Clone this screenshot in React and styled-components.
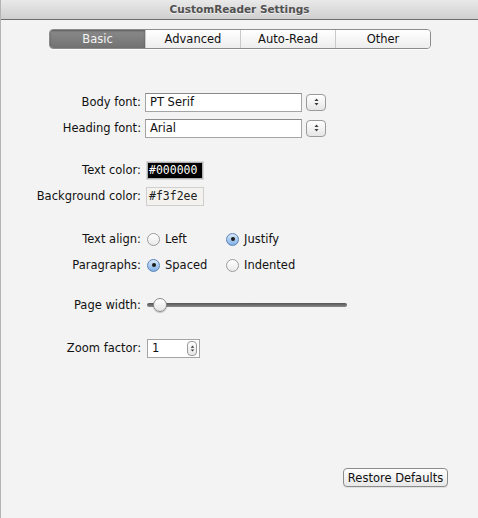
import React from 'react';
import styled, { createGlobalStyle, css } from 'styled-components';

const Global = createGlobalStyle`
    html, body {
        margin: 0;
        padding: 0;
        background: #f3f3f3;
    }
    * { box-sizing: border-box; }
`;

const Window = styled.div`
    width: 478px;
    height: 518px;
    background: #f3f3f3;
    border-left: 1px solid #b4b4b4;
    display: flex;
    flex-direction: column;
    font-family: "DejaVu Sans", "Liberation Sans", sans-serif;
    font-size: 11.5px;
    color: #111;
`;

const TitleBar = styled.div`
    height: 20px;
    flex: none;
    display: flex;
    align-items: center;
    justify-content: center;
    background: linear-gradient(#e9e9e9, #cfcfcf);
    border-bottom: 1px solid #6c6c6c;
    font-weight: bold;
    font-size: 10.5px;
    color: #505050;
    text-shadow: 0 1px 0 rgba(255, 255, 255, 0.6);
    padding-bottom: 1px;
`;

const Tabs = styled.div`
    display: flex;
    align-self: flex-start;
    margin: 9px 0 0 48px;
    height: 20px;
    border: 1px solid #8c8c8c;
    border-radius: 4px;
    overflow: hidden;
    box-shadow: 0 1px 0 rgba(255, 255, 255, 0.8);
`;

const Tab = styled.div`
    width: 95px;
    display: flex;
    align-items: center;
    justify-content: center;
    background: linear-gradient(#ffffff, #ededed);
    color: #111;
    border-left: ${p => (p.$first ? 'none' : '1px solid #c9c9c9')};
    ${p => p.$active && css`
        background: linear-gradient(#8a8a8a, #727272);
        color: #f4f4f4;
        box-shadow: inset 0 1px 2px rgba(0, 0, 0, 0.35);
    `}
`;

const Form = styled.div`
    display: flex;
    flex-direction: column;
    margin-top: 40px;
`;

// spacing between groups is passed per group, groups are separated by a blank band
const Group = styled.div`
    display: flex;
    flex-direction: column;
    margin-top: ${p => p.$gap || 0}px;
`;

const Row = styled.div`
    display: grid;
    grid-template-columns: 140px 1fr;
    column-gap: 4px;
    align-items: center;
    height: 26px;
`;

const Label = styled.div`
    text-align: right;
`;

const Controls = styled.div`
    display: flex;
    align-items: center;
    gap: 4px;
`;

const TextField = styled.div`
    width: 157px;
    height: 19px;
    background: #fff;
    border: 1px solid #a4a4a4;
    border-top-color: #8a8a8a;
    padding: 0 4px;
    display: flex;
    align-items: center;
`;

const StepButton = styled.div`
    width: 20px;
    height: 17px;
    border: 1px solid #9a9a9a;
    border-radius: 4px;
    background: linear-gradient(#ffffff, #e6e6e6);
    display: flex;
    align-items: center;
    justify-content: center;
`;

const Swatch = styled.div`
    width: 58px;
    height: 19px;
    margin-left: 1px;
    display: flex;
    align-items: center;
    padding: 0 2px;
    font-family: "DejaVu Sans Mono", "Liberation Mono", monospace;
    font-size: 11.5px;
    background: ${p => p.$bg};
    color: ${p => p.$fg};
    border: 1px solid #cfcfcf;
    ${p => p.$dark && css`border: 1px solid #d8d8d8; outline: 1px solid #b0b0b0; outline-offset: -2px;`}
`;

const RadioGroup = styled.div`
    display: flex;
    align-items: center;
    padding-left: 2px;
`;

const RadioOption = styled.label`
    width: 79px;
    display: flex;
    align-items: center;
    gap: 5px;
`;

const RadioDot = styled.span`
    width: 13px;
    height: 13px;
    border-radius: 50%;
    border: 1px solid #9c9c9c;
    background: linear-gradient(#ffffff, #e9e9e9);
    display: flex;
    align-items: center;
    justify-content: center;
    ${p => p.$on && css`
        border-color: #5a83b8;
        background: linear-gradient(#d9e8f8, #7fb0e6);
        &::after {
            content: '';
            width: 4px;
            height: 4px;
            border-radius: 50%;
            background: #1a1a1a;
        }
    `}
`;

const Slider = styled.div`
    position: relative;
    width: 200px;
    height: 13px;
    margin-left: 2px;
    display: flex;
    align-items: center;
`;

const Track = styled.div`
    width: 100%;
    height: 4px;
    border-radius: 2px;
    background: linear-gradient(#555, #8a8a8a);
`;

const Knob = styled.div`
    position: absolute;
    left: 6px;
    top: -1px;
    width: 14px;
    height: 14px;
    border-radius: 50%;
    border: 1px solid #8a8a8a;
    background: linear-gradient(#ffffff, #e4e4e4);
    box-shadow: 0 1px 1px rgba(0, 0, 0, 0.2);
`;

const NumberField = styled.div`
    width: 53px;
    height: 19px;
    margin-left: 2px;
    background: #fff;
    border: 1px solid #a4a4a4;
    padding: 0 2px 0 4px;
    display: flex;
    align-items: center;
    justify-content: space-between;
`;

const MiniStepper = styled.div`
    width: 10px;
    height: 15px;
    border: 1px solid #9a9a9a;
    border-radius: 4px;
    background: linear-gradient(#ffffff, #e6e6e6);
    display: flex;
    align-items: center;
    justify-content: center;
`;

const Footer = styled.div`
    margin-top: auto;
    display: flex;
    justify-content: flex-end;
    padding: 0 30px 31px 0;
`;

const Button = styled.div`
    width: 105px;
    height: 19px;
    border: 1px solid #8c8c8c;
    border-radius: 4px;
    background: linear-gradient(#ffffff, #e7e7e7);
    display: flex;
    align-items: center;
    justify-content: center;
    box-shadow: 0 1px 0 rgba(0, 0, 0, 0.08);
`;

const Arrows = ({ h = 8 }) => (
    <svg width="5" height={h} viewBox="0 0 5 8">
        <path d="M2.5 0.5 L4.5 3 L0.5 3 Z" fill="#3a3a3a" />
        <path d="M2.5 7.5 L4.5 5 L0.5 5 Z" fill="#3a3a3a" />
    </svg>
);

const App = () => {
    return (
        <Window>
            <Global />
            <TitleBar>CustomReader Settings</TitleBar>
            <Tabs>
                <Tab $first $active>Basic</Tab>
                <Tab>Advanced</Tab>
                <Tab>Auto-Read</Tab>
                <Tab>Other</Tab>
            </Tabs>

            <Form>
                <Group>
                    <Row>
                        <Label>Body font:</Label>
                        <Controls>
                            <TextField>PT Serif</TextField>
                            <StepButton><Arrows /></StepButton>
                        </Controls>
                    </Row>
                    <Row>
                        <Label>Heading font:</Label>
                        <Controls>
                            <TextField>Arial</TextField>
                            <StepButton><Arrows /></StepButton>
                        </Controls>
                    </Row>
                </Group>

                <Group $gap={16}>
                    <Row>
                        <Label>Text color:</Label>
                        <Controls>
                            <Swatch $bg="#000" $fg="#fff" $dark>#000000</Swatch>
                        </Controls>
                    </Row>
                    <Row>
                        <Label>Background color:</Label>
                        <Controls>
                            <Swatch $bg="#f3f2ee" $fg="#222">#f3f2ee</Swatch>
                        </Controls>
                    </Row>
                </Group>

                <Group $gap={17}>
                    <Row>
                        <Label>Text align:</Label>
                        <RadioGroup>
                            <RadioOption><RadioDot />Left</RadioOption>
                            <RadioOption><RadioDot $on />Justify</RadioOption>
                        </RadioGroup>
                    </Row>
                    <Row>
                        <Label>Paragraphs:</Label>
                        <RadioGroup>
                            <RadioOption><RadioDot $on />Spaced</RadioOption>
                            <RadioOption><RadioDot />Indented</RadioOption>
                        </RadioGroup>
                    </Row>
                </Group>

                <Group $gap={14}>
                    <Row>
                        <Label>Page width:</Label>
                        <Slider>
                            <Track />
                            <Knob />
                        </Slider>
                    </Row>
                </Group>

                <Group $gap={17}>
                    <Row>
                        <Label>Zoom factor:</Label>
                        <Controls>
                            <NumberField>
                                1
                                <MiniStepper><Arrows h={7} /></MiniStepper>
                            </NumberField>
                        </Controls>
                    </Row>
                </Group>
            </Form>

            <Footer>
                <Button>Restore Defaults</Button>
            </Footer>
        </Window>
    );
};

export default App;
